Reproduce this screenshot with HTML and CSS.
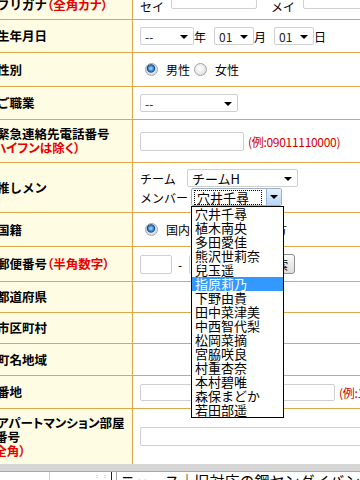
FILE: index.html
```html
<!DOCTYPE html>
<html lang="ja">
<head>
<meta charset="utf-8">
<link rel="stylesheet" href="styles.css">
</head>
<body>
<div class="page">
  <div class="form">
    <div class="row h1">
      <div class="lab top"><span class="t">フリガナ<span class="red">（全角カナ）</span></span></div>
      <div class="val">セイ <span class="inp w-sei"></span><span class="gap14"></span>メイ <span class="inp w-mei"></span></div>
    </div>
    <div class="row h2">
      <div class="lab"><span class="t">生年月日</span></div>
      <div class="val"><span class="sel w54">--<i class="arr"></i></span>年<span class="gap8"></span><span class="sel w40">01<i class="arr"></i></span>月<span class="gap8"></span><span class="sel w40">01<i class="arr"></i></span>日</div>
    </div>
    <div class="row h3">
      <div class="lab"><span class="t">性別</span></div>
      <div class="val"><span class="radio on"></span><span class="rl">男性</span><span class="radio"></span><span class="rl">女性</span></div>
    </div>
    <div class="row h4">
      <div class="lab"><span class="t">ご職業</span></div>
      <div class="val"><span class="sel w98">--<i class="arr"></i></span></div>
    </div>
    <div class="row h5">
      <div class="lab"><span class="t">緊急連絡先電話番号<br><span class="red paren">（ハイフンは除く）</span></span></div>
      <div class="val"><span class="inp w104 tall"></span><span class="ex">(例:09011110000)</span></div>
    </div>
    <div class="row h6">
      <div class="lab"><span class="t">推しメン</span></div>
      <div class="val col">
        <div class="line"><span class="small">チーム</span><span class="sel w111 big">チームH<i class="arr"></i></span></div>
        <div class="line"><span class="small">メンバー</span><span class="sel w91 big focus"><span class="ftext">穴井千尋</span><span class="fbtn"><i class="arr"></i></span></span></div>
      </div>
    </div>
    <div class="row h7">
      <div class="lab"><span class="t">国籍</span></div>
      <div class="val"><span class="radio on"></span><span class="rl">国内の方</span><span class="radio"></span><span class="rl">海外の方</span></div>
    </div>
    <div class="row h8">
      <div class="lab"><span class="t">郵便番号<span class="red">（半角数字）</span></span></div>
      <div class="val"><span class="inp w31 tall"></span><span class="dash">-</span><span class="inp w40 tall"></span><span class="btn">住所検索</span></div>
    </div>
    <div class="row h9">
      <div class="lab"><span class="t">都道府県</span></div>
      <div class="val"></div>
    </div>
    <div class="row h10">
      <div class="lab"><span class="t">市区町村</span></div>
      <div class="val"></div>
    </div>
    <div class="row h11">
      <div class="lab"><span class="t">町名地域</span></div>
      <div class="val"></div>
    </div>
    <div class="row h12">
      <div class="lab"><span class="t">番地</span></div>
      <div class="val"><span class="inp w195"></span><span class="ex">(例:1-2-3)</span></div>
    </div>
    <div class="row h13">
      <div class="lab prop"><span class="t">アパートマンション部屋<br><span class="ind">番号</span><br><span class="red ind2">（全角）</span></span></div>
      <div class="val"><span class="inp w260 tall"></span></div>
    </div>
  </div>
  <div class="grayband"></div>
  <div class="bottom">
    <div class="bcell b1"></div>
    <div class="bcell b2"><span class="grip">⋮⋮</span></div>
    <div class="bcell b3">ニュース｜旧対応の鋼ヤングイバン</div>
  </div>

  <ul class="list">
    <li>穴井千尋</li>
    <li>植木南央</li>
    <li>多田愛佳</li>
    <li>熊沢世莉奈</li>
    <li>兒玉遥</li>
    <li class="hl">指原莉乃</li>
    <li>下野由貴</li>
    <li>田中菜津美</li>
    <li>中西智代梨</li>
    <li>松岡菜摘</li>
    <li>宮脇咲良</li>
    <li>村重杏奈</li>
    <li>本村碧唯</li>
    <li>森保まどか</li>
    <li>若田部遥</li>
  </ul>
</div>
</body>
</html>
```
FILE: styles.css
```css
html, body { margin: 0; padding: 0; background: #fff; }
body { font-family: "Noto Sans CJK JP", "Noto Sans", sans-serif; color: #000; }
.page { position: relative; width: 360px; height: 480px; overflow: hidden; }

.form { width: 430px; margin-top: -14px; margin-left: -3px; }
.row { display: grid; grid-template-columns: 136px 1fr; border-bottom: 1px solid #e0a64a; box-sizing: border-box; }
.lab { background: #fffce4; border-right: 1px solid #e0a64a; font-weight: bold; font-size: 12.5px; line-height: 14px; display: flex; align-items: center; }
.lab .t { display: block; }
.lab .red { color: #e60000; font-feature-settings: "palt"; }
.lab.prop { font-feature-settings: "palt"; }
.lab.top { align-items: flex-start; padding-top: 12px; }
.val { display: flex; align-items: center; padding-left: 7px; font-size: 12px; white-space: nowrap; }

.h1 { height: 34px; } .h2 { height: 33px; } .h3 { height: 34px; } .h4 { height: 33px; }
.h5 { height: 43px; } .h6 { height: 50px; } .h7 { height: 34px; } .h8 { height: 35px; }
.h9 { height: 31px; } .h10 { height: 31px; } .h11 { height: 32px; } .h12 { height: 33px; }
.h13 { height: 55px; border-bottom: none; }

.lab .paren { display: inline-block; margin-left: -9px; }
.lab .ind { display: inline-block; margin-left: -2px; }
.lab .ind2 { display: inline-block; margin-left: -9px; }

.inp { display: inline-block; height: 17px; border: 1px solid #cfcfcf; border-radius: 2px; background: #fff; box-sizing: border-box; }
.inp.tall { height: 19px; }
.w-sei { width: 86px; margin-left: 7px; }
.w-mei { width: 80px; margin-left: 8px; }
.h1 .val { align-items: flex-start; padding-top: 12px; }
.h1 .val .inp { margin-top: -6px; }
.w104 { width: 104px; }
.w31 { width: 32px; }
.w40 { width: 40px; }
.w195 { width: 195px; }
.w260 { width: 260px; }
.gap14 { display: inline-block; width: 14px; }
.gap8 { display: inline-block; width: 8px; }

.sel { position: relative; display: inline-flex; align-items: center; height: 18px; border: 1px solid #cfcfcf; border-radius: 2px; background: #fff; box-sizing: border-box; padding-left: 4px; font-size: 12px; color: #222; }
.w54 { width: 54px; }
.sel.w40 { width: 40px; margin-left: 0; }
.w98 { width: 98px; }
.w111 { width: 111px; }
.w91 { width: 91px; }
.arr { position: absolute; right: 5px; top: 7px; width: 0; height: 0; border-left: 4px solid transparent; border-right: 4px solid transparent; border-top: 4px solid #000; }
.sel.big { font-size: 13px; color: #000; }

.col { flex-direction: column; align-items: flex-start; justify-content: center; gap: 1px; }
.line { display: flex; align-items: center; }
.small { font-size: 12px; display: inline-block; }
.line:first-child .small { width: 47px; }
.line:last-child .small { width: 51px; }
.sel.focus { border-color: #9bb0c8; padding-left: 2px; padding-right: 0; }
.ftext { border: 1px dotted #000; line-height: 13px; padding: 0 2px; width: 68px; box-sizing: border-box; }
.fbtn { position: absolute; right: 0; top: 0; bottom: 0; width: 15px; background: linear-gradient(#e6f1fd, #b8d6f6); border-left: 1px solid #8fb3db; box-sizing: border-box; border-radius: 0 2px 2px 0; }
.fbtn .arr { right: 3px; top: 6px; }

.radio { display: inline-block; width: 13px; height: 13px; border-radius: 50%; box-sizing: border-box; border: 1px solid #9ea3a8; background: radial-gradient(circle at 40% 40%, #ffffff 0, #e8e8e8 60%, #c8c8c8 100%); margin-left: 5px; margin-right: 8px; }
.radio.on { background: radial-gradient(circle at 45% 40%, #bfe3ff 0, #3b8ed6 28%, #1a4f8f 42%, #dcdcdc 52%, #f2f2f2 100%); }
.rl { font-size: 12px; }
.radio:not(.on) { margin-left: 4px; }

.ex { color: #d00000; font-size: 12px; margin-left: 4px; letter-spacing: -0.3px; }
.dash { margin: 0 7px 0 6px; }
.btn { display: inline-flex; align-items: center; height: 20px; padding: 0 6px; margin-left: 4px; border: 1px solid #8d8d8d; border-radius: 3px; background: linear-gradient(#fafafa, #dcdcdc); font-size: 12px; box-sizing: border-box; }

.grayband { height: 7px; background: #d6d6d6; border-bottom: 1px solid #a8a8a8; }
.bottom { display: flex; height: 30px; background: #fff; }
.bcell { height: 100%; box-sizing: border-box; }
.b1 { width: 62px; border-right: 1px solid #d0d0d0; }
.b2 { width: 78px; border-right: 1px solid #222; text-align: right; color: #aaa; font-size: 8px; line-height: 8px; padding-right: 2px; padding-top: 1px; }
.b3 { border-left: 1px solid #aaa; margin-left: 4px; padding-left: 3px; padding-top: 1px; font-size: 15px; line-height: 16px; white-space: nowrap; }

.list { position: absolute; left: 191px; top: 206px; width: 93px; margin: 0; padding: 0; list-style: none; background: #fff; border: 1px solid #000; box-sizing: border-box; font-size: 13px; line-height: 14px; }
.list li { padding-left: 3px; height: 14px; }
.list li.hl { background: #3399ff; color: #fff; }
```
